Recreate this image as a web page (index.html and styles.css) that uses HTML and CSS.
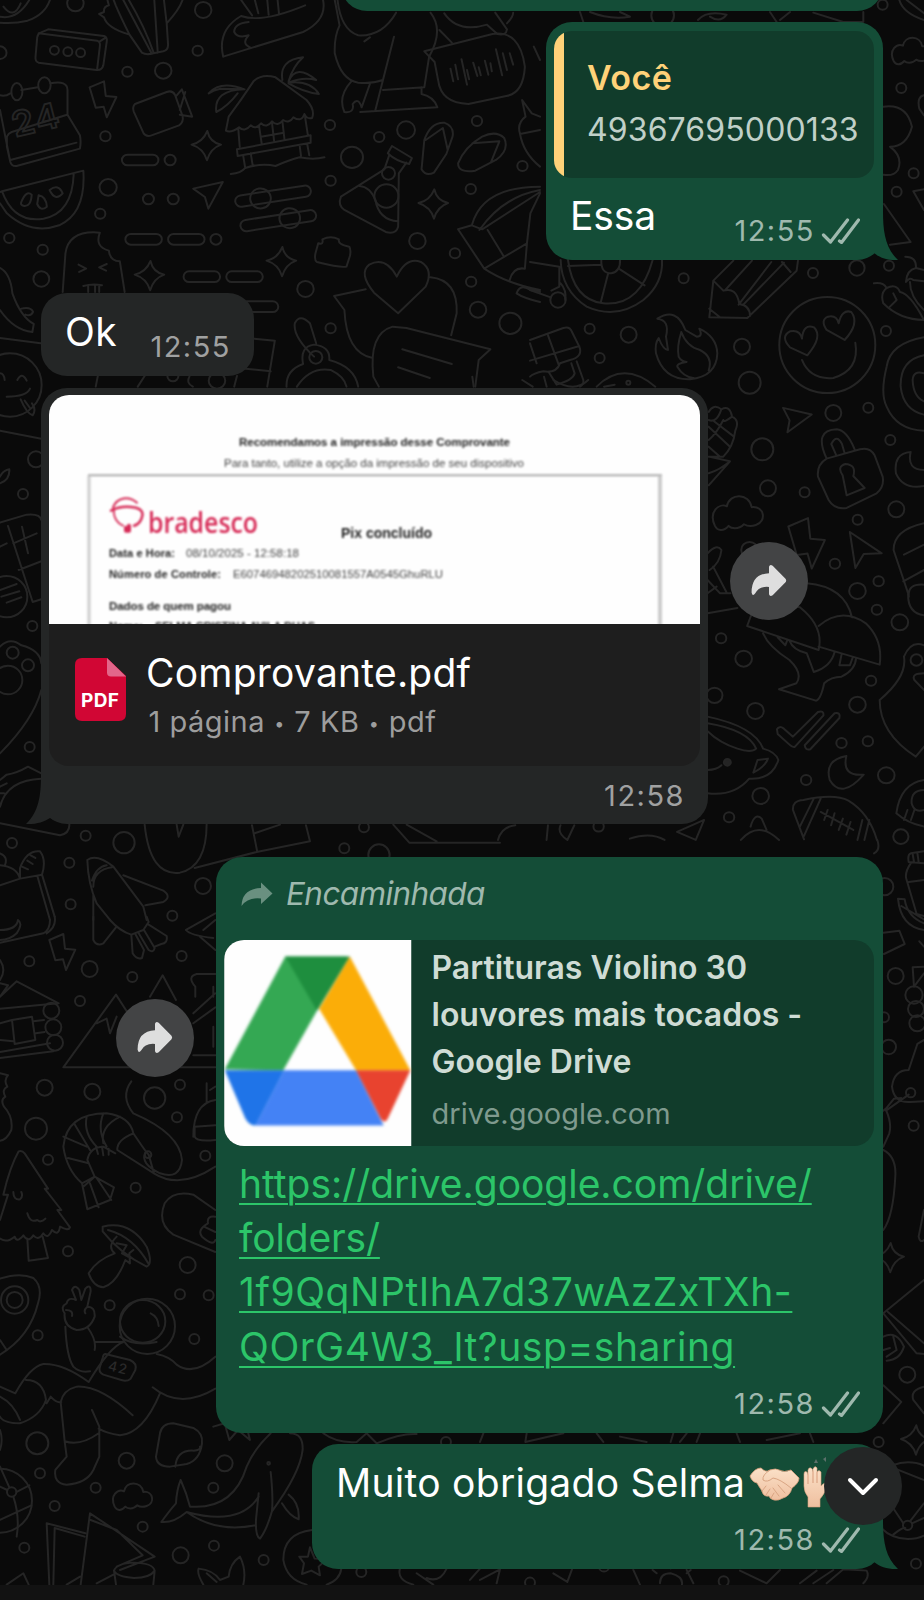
FILE: index.html
```html
<!DOCTYPE html>
<html lang="pt-BR">
<head>
<meta charset="utf-8">
<title>Conversa</title>
<link rel="stylesheet" href="styles.css">
</head>
<body>
<div class="screen">
<svg class="wallpaper" width="924" height="1600" viewBox="0 0 924 1600" aria-hidden="true">
  <defs>
    <path id="star" d="M3 -44Q10 -10 43 -3Q12 8 2 44Q-8 8 -43 -3Q-10 -10 3 -44z"/>
    <path id="bolt" d="M-38 -36L4 -54L9 -10L40 -7L12 54L3 22L-20 25z"/>
    <path id="nav" d="M-44 -20L42 -40L0 40L-10 5z"/>
    <path id="cloud" d="M-54 28C-70 -6 -44 -26 -26 -18C-20 -50 26 -50 32 -16C62 -20 68 18 42 26C30 30 20 28 14 24C0 38 -16 34 -22 28C-34 42 -48 40 -54 28z"/>
  </defs>
  <g transform="scale(.3444 .3333)">
    <g>
      <circle cx="219" cy="10" r="24"/><circle cx="590" cy="30" r="24"/><circle cx="574" cy="152" r="15"/><circle cx="370" cy="215" r="15"/><circle cx="474" cy="212" r="24"/><circle cx="0" cy="158" r="19"/>
      <circle cx="306" cy="409" r="15"/><circle cx="494" cy="480" r="16"/><circle cx="314" cy="562" r="25"/><circle cx="431" cy="597" r="16"/><circle cx="503" cy="597" r="16"/><circle cx="291" cy="641" r="15"/><circle cx="27" cy="714" r="15"/><circle cx="124" cy="749" r="15"/><circle cx="627" cy="718" r="16"/><circle cx="120" cy="837" r="23"/>
      <circle cx="958" cy="375" r="15"/><circle cx="1101" cy="411" r="15"/><circle cx="1179" cy="390" r="26"/><circle cx="1022" cy="472" r="32"/><circle cx="960" cy="542" r="15"/><circle cx="1385" cy="363" r="15"/><circle cx="1517" cy="498" r="15"/><circle cx="1367" cy="567" r="15"/><circle cx="1212" cy="723" r="24"/><circle cx="1321" cy="760" r="15"/><circle cx="1368" cy="845" r="15"/><circle cx="1388" cy="929" r="24"/><circle cx="1482" cy="970" r="32"/><circle cx="960" cy="985" r="15"/><circle cx="887" cy="867" r="24"/>
    </g>
    <path d="M0 68Q40 72 80 62Q130 45 145 0M0 50Q50 60 85 0M10 20Q40 60 60 10"/>
    <path d="M118 98L140 88L302 108Q312 112 310 124L300 196Q296 212 280 210L112 188Q102 184 103 172L108 112Q110 100 118 98zM112 100L282 122Q292 126 290 138L282 208M290 124L308 112"/>
    <circle cx="158" cy="151" r="13"/><circle cx="197" cy="155" r="13"/><circle cx="234" cy="158" r="13"/>
    <path d="M312 0L316 16Q300 20 302 36L288 42L302 52Q310 84 376 104Q350 50 336 16L330 0M376 104L412 158Q424 166 446 160L474 154Q488 150 488 134L484 70Q520 30 530 0M358 0L440 160M374 0Q420 80 446 158M448 0L458 158M476 0L484 70"/>
    <path d="M648 170L880 96Q950 60 938 0M648 170Q630 90 700 48Q760 70 886 16M722 66Q680 70 680 96Q690 116 722 106Q700 130 726 142M700 0L732 46M740 0L750 40M776 0L780 44M806 0L810 40"/>
    <path d="M0 286Q16 290 30 280M62 270L110 262M146 250Q196 240 196 270V344L232 406Q236 426 232 446L48 498Q34 500 30 486L0 330M196 344L190 346L34 396Q24 400 20 410V440L30 486M30 480L222 428"/>
    <ellipse cx="49" cy="275" rx="16" ry="26"/><ellipse cx="129" cy="256" rx="18" ry="24"/>
    <text x="44" y="412" class="digits" font-size="104" transform="rotate(-14 44 412)">24</text>
    <use href="#bolt" x="298" y="298"/>
    <path d="M392 312L484 276Q500 270 508 284L530 348Q534 366 520 376L440 406Q424 412 416 398L388 334Q384 320 392 312zM510 290L528 268L558 350L522 344M538 276L522 330"/>
    <path d="M656 392L664 350Q700 300 736 244Q760 220 800 232L890 300Q916 330 906 354Q890 358 884 342Q876 368 852 352Q840 372 822 360Q806 382 790 364Q774 386 758 370Q742 390 728 376Q710 398 694 382Q670 400 656 392zM606 280Q640 240 710 268L640 266Q620 270 606 280M710 268Q620 270 628 336Q660 320 690 280M820 240Q810 180 880 172Q850 200 838 244Q860 190 918 240Q880 230 838 248Q900 240 926 282Q880 276 838 250M692 388L696 440M886 352L894 406M688 448L902 406V428L690 468zM706 466L712 504M728 460L734 498M870 436L874 468M892 432L898 466M752 376L760 432M790 370L796 424M820 364L826 418M758 410L824 398M670 522Q700 520 712 504Q760 488 800 498Q840 480 870 472Q910 480 942 472"/>
    <use href="#star" x="599" y="437"/><use href="#star" x="1258" y="612"/><use href="#star" x="434" y="827"/><use href="#star" x="817" y="785"/>
    <rect x="354" y="464" width="106" height="32" rx="16"/><rect x="364" y="702" width="106" height="32" rx="16"/><rect x="488" y="702" width="106" height="32" rx="16"/><rect x="533" y="814" width="106" height="32" rx="16"/><rect x="657" y="814" width="106" height="32" rx="16"/><rect x="702" y="904" width="106" height="32" rx="16"/>
    <path d="M6 574L242 512Q250 640 172 676Q90 706 20 640L0 610M6 574Q40 670 126 656Q210 640 214 522M0 576L6 574M62 606Q76 570 92 584Q90 620 70 618Q58 616 62 606zM112 586Q134 590 136 620Q118 636 108 612zM144 570Q170 550 182 580Q160 606 144 570z"/>
    <use href="#nav" x="605" y="586"/>
    <g transform="rotate(-9 790 590)"><rect x="682" y="572" width="222" height="34" rx="17"/><circle cx="756" cy="590" r="30"/></g><g transform="rotate(-9 808 662)"><rect x="697" y="645" width="222" height="34" rx="17"/><circle cx="842" cy="660" r="30"/></g>
    <path d="M182 876L190 760Q200 690 290 698Q274 740 316 752Q320 784 348 784L362 876M228 794L250 806L230 816M310 792L288 802L308 812M242 858Q270 850 296 856M256 858V876M276 856V876M288 856V876"/>
    <path d="M0 804Q30 820 36 880Q60 950 98 972L94 996Q40 990 0 930M62 926Q90 920 96 936Q90 950 74 944M0 1014L118 1030"/>
    <path d="M980 0Q990 90 1040 106Q1110 110 1150 38M972 0L986 76Q970 110 972 160Q990 240 1040 248Q1080 252 1112 240L1144 110M1058 124L1074 112M1250 38Q1290 90 1246 170L1232 262L1112 270M1020 244Q980 290 1000 336Q1030 340 1024 312Q1040 290 1050 322L1074 252M1046 336L1270 322Q1260 290 1224 282V262M1112 240L1090 330M1276 90L1312 128"/>
    <path d="M1232 154L1430 102Q1510 90 1524 200Q1520 280 1470 288L1360 312Q1280 310 1272 240L1262 186zM1308 206L1316 244M1322 194L1330 238M1340 178L1356 254M1356 210L1362 238M1374 188L1386 228M1390 202L1396 226M1408 182L1418 224M1424 190L1428 214M1440 148L1458 226M1460 160L1472 210M1480 160L1490 194M1414 74L1444 102Q1470 108 1472 88L1438 38M1290 40Q1330 100 1414 74M1472 70Q1490 50 1490 38"/>
    <path d="M1224 508L1232 420Q1250 366 1290 368Q1320 380 1314 410L1296 462L1260 518Q1236 530 1224 508zM1236 420L1286 384L1300 450M1330 490Q1350 440 1400 410Q1440 390 1464 414Q1480 450 1440 480L1380 512Q1330 520 1330 490zM1372 430L1450 424L1426 486"/>
    <path d="M1126 460L1138 438L1196 474L1188 492Q1150 484 1126 460zM1130 466L1116 508L990 590Q980 616 1000 630L1120 696Q1150 704 1156 680L1158 520L1180 488M1044 558Q1074 560 1090 600Q1100 660 1156 664"/><circle cx="1128" cy="520" r="19"/><circle cx="1122" cy="588" r="35"/>
    <path d="M916 760L924 730Q940 736 936 718Q960 706 984 718Q980 734 1014 740Q1020 750 1016 768L1006 800Q990 804 920 786Q912 780 916 760z"/>
    <path d="M1156 940L1086 878Q1040 820 1072 794Q1120 768 1152 830Q1180 770 1222 786Q1260 810 1236 860zM1062 868L970 888L1000 930Q1006 1060 1082 1074M1250 832Q1330 840 1326 940L1310 1006M1084 1130Q1070 1000 1140 980L1180 984L1424 1048L1390 1080L1380 1160M1084 1130L1100 1160M1168 1048L1312 1092M1156 1102L1248 1134"/>
    <path d="M738 1016L798 1022L776 1160M688 1128L680 1160M690 1104L786 1114M880 1092Q870 1040 912 1034Q960 1040 956 1080Q1030 1100 1040 1160M880 1092Q830 1110 832 1160M862 1160Q900 1100 960 1110Q1000 1130 1006 1160M912 1070Q850 1010 856 970Q870 940 900 970L918 1030"/><circle cx="917" cy="1072" r="19"/>
    <path d="M1370 676Q1400 560 1568 560M1392 690Q1460 590 1568 570M1330 688L1370 676L1400 688L1568 576M1330 688L1406 806L1530 730L1540 640L1568 580M1406 806Q1470 850 1568 870M1416 690L1462 768M1480 840Q1490 800 1524 806L1530 730M1500 880Q1510 850 1540 870L1568 876M1500 880Q1520 894 1568 906"/>
    <path d="M1568 350L1544 340L1516 300L1526 350Q1500 370 1510 402Q1520 460 1568 500M1510 402L1568 390M1550 140L1568 180M284 1128L278 1160M420 1128L400 1160M550 1130Q540 1150 560 1160"/><circle cx="630" cy="1142" r="24"/><circle cx="502" cy="1128" r="16"/>
  </g>
  <g transform="translate(530) scale(.3333)">
    <circle cx="1058" cy="14" r="15"/><circle cx="1114" cy="264" r="15"/><circle cx="1151" cy="520" r="15"/><circle cx="1100" cy="575" r="15"/><circle cx="398" cy="46" r="34"/><use href="#cloud" x="1145" y="155"/>
    <path d="M150 36L160 66M180 36Q240 60 300 50L270 36M504 60Q530 30 590 44Q570 70 540 50M720 36L740 66M780 36L750 60M850 38L940 66H1000V36M1060 320Q1130 310 1146 380Q1130 440 1080 440Q1120 470 1104 510Q1090 530 1060 524M1182 286Q1160 290 1168 326L1182 346M1062 612L1142 726L1080 734M1182 568L1150 574L1182 630M1108 0Q1120 40 1182 60M1130 0L1182 40"/>
  </g>
  <g transform="translate(530 240) scale(.3333)">
    <circle cx="461" cy="115" r="15"/><circle cx="179" cy="266" r="15"/><circle cx="209" cy="354" r="15"/><circle cx="296" cy="284" r="24"/><circle cx="636" cy="320" r="24"/><circle cx="659" cy="428" r="33"/><circle cx="849" cy="99" r="15"/><circle cx="981" cy="84" r="23"/><circle cx="1077" cy="77" r="15"/><circle cx="1068" cy="273" r="15"/><circle cx="910" cy="519" r="24"/><circle cx="1015" cy="503" r="15"/><circle cx="1081" cy="600" r="15"/><circle cx="697" cy="628" r="33"/><circle cx="714" cy="745" r="24"/><circle cx="824" cy="757" r="15"/><circle cx="1099" cy="808" r="24"/><circle cx="983" cy="839" r="15"/>
    <path d="M92 60Q94 150 170 200Q260 240 340 180Q400 130 396 60M114 60Q130 180 220 190Q330 200 368 60M214 60Q212 100 244 100Q272 94 270 60M114 78L212 74M234 102L212 188M270 88L344 136M0 66L88 80V140L64 152M0 150L62 172M92 130Q110 150 106 180"/><circle cx="84" cy="180" r="23"/>
    <path d="M610 62L550 122L538 232L652 234L800 92L804 62M666 62L586 150M724 66L626 194M762 68L640 194M756 66L782 96M550 122L580 152Q620 140 628 192Q660 196 660 228M538 206L570 232"/>
    <path d="M382 236Q440 200 466 270L500 290Q520 290 508 266Q560 290 562 340Q560 410 480 418Q400 420 378 340Q374 310 386 294Q400 330 414 330L408 290Q420 240 382 236zM454 276Q440 320 446 350Q454 364 470 366Q440 370 442 380Q460 410 490 414M454 276Q470 320 510 330Q550 350 536 392"/>
    <circle cx="892" cy="315" r="144"/><path d="M832 346L780 322Q750 290 780 274Q810 268 816 296Q820 250 852 262Q880 290 832 346zM944 300L890 270Q870 240 894 230Q920 224 926 250Q936 206 964 216Q990 250 944 300zM816 360Q840 420 910 414Q990 390 976 308"/>
    <path d="M0 300L100 264Q120 258 126 276L148 320Q160 350 120 360L90 370Q80 400 40 394Q10 400 0 410M0 362L148 318M54 286L86 374M0 310L20 370M140 364L160 420Q162 434 150 440M124 370L134 400Q130 420 80 434L56 396M200 440Q280 360 376 440M222 440L254 434M42 410L50 440"/><circle cx="295" cy="428" r="6"/>
    <path d="M536 516Q550 490 574 508Q600 494 606 530Q630 540 616 572Q610 620 580 650H536M536 540Q560 550 574 508M580 540Q560 580 536 600M606 530Q580 550 580 540M536 560L600 620M552 544L612 590M536 620L570 650M536 650L600 664L536 736M600 664Q570 690 536 700"/>
    <use href="#nav" transform="translate(790 541) rotate(26)"/><path d="M890 656Q850 570 920 568Q950 570 974 628M918 644L904 612Q920 580 936 612L944 640M890 656L990 628Q1020 620 1034 646L1058 710Q1064 740 1040 760L950 804Q914 810 896 780L864 710Q860 674 890 656zM938 706Q920 680 946 672Q980 674 970 708L1004 744L950 766z"/><use href="#cloud" transform="translate(624 822) scale(1.28)"/>
    <path d="M1142 636Q1090 640 1098 700Q1120 750 1182 738M1142 636Q1130 690 1182 690M1182 292Q1080 310 1070 380Q1050 460 1070 500Q1100 570 1182 572M1182 346Q1110 360 1112 440Q1120 510 1182 524M1182 400Q1150 390 1148 420Q1150 470 1182 484M1032 130Q1060 126 1070 144Q1100 130 1110 156Q1140 160 1182 240Q1110 240 1060 190Q1050 160 1070 144M1080 200L1100 180L1090 160M1126 50Q1160 50 1158 84Q1130 90 1128 126Q1140 110 1150 120L1182 124M1140 126Q1140 170 1182 210M1158 84L1182 90"/>
  </g>
  <g transform="translate(380 380) scale(.347 .3333)">
    <circle cx="1311" cy="551" r="15"/><circle cx="1437" cy="604" r="15"/><circle cx="1376" cy="633" r="24"/><circle cx="1432" cy="689" r="15"/><circle cx="1498" cy="727" r="24"/><circle cx="983" cy="775" r="15"/><circle cx="1048" cy="836" r="24"/><circle cx="964" cy="946" r="23"/><circle cx="1082" cy="993" r="24"/><circle cx="1376" cy="974" r="24"/><circle cx="1415" cy="902" r="15"/><circle cx="1330" cy="1089" r="15"/><circle cx="1406" cy="1084" r="15"/><circle cx="1228" cy="1200" r="15"/><circle cx="1459" cy="1186" r="24"/><circle cx="1097" cy="1248" r="24"/><circle cx="1006" cy="1312" r="15"/><circle cx="1501" cy="1370" r="22"/><circle cx="1546" cy="840" r="17"/><circle cx="1065" cy="510" r="24"/>
    <use href="#bolt" transform="translate(1228 490) scale(1.35 1.4)"/><path d="M1354 456L1446 520L1394 522L1370 564z"/>
    <path d="M1058 738L1264 810Q1280 740 1210 682L1086 660zM1230 610Q1340 620 1360 712M1264 738Q1330 680 1400 730Q1450 780 1440 854L1264 800M1104 760Q1120 800 1180 840Q1220 880 1200 910L1150 928L1256 962Q1270 960 1280 910Q1300 890 1330 890Q1370 870 1372 834M1180 782Q1190 810 1230 820L1250 876Q1300 860 1310 816M1146 772L1168 796L1174 780M1330 824L1324 856L1354 856L1362 834"/>
    <path d="M1144 1048Q1150 1036 1164 1046L1190 1070L1262 996Q1280 990 1278 1006L1196 1100Q1190 1104 1180 1094L1146 1062zM1224 1096L1310 1000Q1328 996 1324 1014L1240 1108Q1226 1112 1224 1096z"/>
    <path d="M944 1010Q1080 1040 1104 1106Q1140 1116 1148 1140Q1130 1200 1064 1196Q1020 1250 944 1240M944 1030Q1060 1050 1084 1106Q1070 1120 1030 1106Q980 1090 944 1054M1088 1140L1118 1136Q1110 1160 1076 1178zM944 1170Q970 1170 984 1156M944 520Q970 490 984 510Q980 550 950 570M960 560L1000 640M944 600L980 640H1010M944 700L1030 684M944 640L970 620"/><circle cx="1001" cy="1147" r="10" class="solid"/>
    <path d="M1344 1128Q1280 1140 1296 1200Q1330 1260 1394 1184Q1330 1190 1344 1128zM1222 1378L1190 1290Q1188 1262 1220 1260Q1310 1240 1350 1262Q1410 1300 1432 1380M1270 1256L1222 1368M1250 1256L1210 1340M1390 1320L1376 1380M1410 1320L1396 1380M1270 1296L1364 1350M1290 1290L1280 1320M1310 1300L1300 1336M1334 1316L1322 1350M1356 1326L1344 1364"/>
    <path d="M1568 430Q1480 450 1480 510L1522 640Q1520 700 1568 706M1510 524L1568 494M1508 604L1568 570M1568 614Q1520 610 1524 650M1568 796Q1530 780 1510 830Q1520 890 1440 960Q1440 1060 1544 1130L1568 1100M1568 880Q1530 880 1540 900L1568 930M1568 1200Q1500 1210 1488 1300Q1520 1330 1568 1340M1568 1230Q1530 1230 1532 1270Q1540 1300 1568 1290M1520 1290L1510 1320M1540 1290L1530 1320"/>
    <path d="M856 1356L934 1320L910 1380zM1068 1340Q1080 1296 1100 1316L1114 1350M1040 1380Q1090 1320 1150 1380M340 1380Q350 1340 390 1336M484 1336L480 1380M520 1336Q510 1360 540 1380L560 1336M720 1376Q780 1356 820 1380M270 20L266 -10M410 0L440 20M500 0Q560 40 600 0"/><circle cx="630" cy="1340" r="15"/>
  </g>
  <g transform="translate(0 280) scale(.3333)">
    <circle cx="69" cy="642" r="15"/><circle cx="108" cy="538" r="24"/><circle cx="20" cy="950" r="62"/><circle cx="97" cy="1038" r="15"/>
    <circle cx="30" cy="315" r="95"/><path d="M0 280Q12 280 14 300M52 300Q66 274 80 302M20 350Q80 350 90 326M62 358Q80 400 98 406Q110 390 96 370M74 362L90 384M0 452L124 476M0 610Q30 600 28 568Q10 570 0 590M0 728L80 704Q120 700 124 720M24 738L98 966L124 958M0 800L20 790M40 790L110 760M66 740L84 820M56 870L124 844M0 930L50 912M4 950L58 934M20 968L64 952"/>
  </g>
  <g transform="translate(0 620) scale(.3333)">
    <circle cx="38" cy="98" r="18"/><circle cx="84" cy="136" r="18"/><circle cx="24" cy="180" r="43"/><circle cx="89" cy="381" r="15"/><circle cx="257" cy="647" r="15"/><circle cx="372" cy="668" r="32"/><circle cx="36" cy="669" r="15"/><circle cx="208" cy="728" r="15"/><circle cx="212" cy="853" r="15"/><circle cx="609" cy="798" r="24"/><circle cx="517" cy="887" r="15"/><circle cx="1092" cy="622" r="15"/><circle cx="1033" cy="685" r="15"/><circle cx="1137" cy="705" r="32"/>
    <path d="M0 80Q30 50 64 76Q120 90 124 130M124 210Q100 300 0 400M0 480L20 464Q50 460 84 440L124 460M0 560Q20 480 124 476M0 500L20 490M0 520H12M0 610L180 646Q210 640 208 612M434 614Q450 770 540 758Q620 740 620 612M530 614L536 650L550 614M584 744L770 696L930 664L918 616M756 616L772 696M764 640L840 614M1180 614L1228 668H1500M1220 614L1310 664"/>
    <path d="M60 744Q80 690 120 694Q140 720 126 764L60 776zM66 740L84 748M82 722L98 732M92 706L106 714M0 736Q50 740 60 776L0 796M126 764L164 890M112 768L150 900M0 700Q26 710 14 738M262 720Q290 700 340 740L430 860L440 900M262 720Q264 790 290 850L330 900M280 800Q280 750 336 742M276 782Q290 740 320 736M370 766L490 812Q516 830 490 846L436 856M280 826V900"/>
  </g>
  <g transform="translate(0 850) scale(.3333)">
    <circle cx="88" cy="334" r="15"/><circle cx="269" cy="357" r="24"/><circle cx="397" cy="381" r="15"/><circle cx="240" cy="453" r="15"/><circle cx="545" cy="318" r="15"/><circle cx="134" cy="713" r="24"/><circle cx="277" cy="725" r="24"/><circle cx="464" cy="744" r="32"/><circle cx="540" cy="704" r="15"/><circle cx="531" cy="802" r="15"/><circle cx="108" cy="836" r="33"/><circle cx="144" cy="929" r="15"/><circle cx="407" cy="1013" r="15"/><circle cx="616" cy="917" r="15"/>
    <use href="#bolt" x="186" y="306"/>
    <path d="M150 210Q150 240 130 250L0 278M164 200Q170 230 140 250M0 240Q50 240 54 210Q70 220 50 250Q30 270 0 270M280 200V270Q290 290 310 280L348 232M330 210Q360 244 394 254L430 240L446 216L440 200M394 254L398 310Q410 330 426 324L432 300L406 252M414 246L446 300Q460 310 464 294L432 240M446 224L500 258Q504 280 484 282L464 290M558 240L646 190M558 240Q570 256 640 264M600 260L646 300M646 210L610 240"/>
    <path d="M0 440L50 394L176 460L0 476M0 400L24 406L0 440M0 520L36 510M0 570L40 574M36 510L96 500L106 570L44 582zM100 514L132 510M108 550L134 546M0 606L150 580M0 624L160 604M0 330Q20 360 0 390M190 652L348 434L384 490M290 520L320 506L330 550L350 500M190 652H646M450 440L488 376L528 450M586 440V410Q560 380 590 372H646M640 410V440M646 430L580 490M580 520L646 472M640 530V590M580 616H646"/><circle cx="154" cy="482" r="24"/><circle cx="160" cy="532" r="24"/><circle cx="165" cy="578" r="24"/>
    <path d="M190 890Q200 790 320 790Q390 800 400 850Q440 910 446 914L462 970L352 900Q350 870 400 850M190 890Q200 960 246 1000L284 980L262 930Q270 890 310 890L346 910M190 860L260 890M222 820L270 900M260 800Q250 850 290 890M310 790Q290 840 320 890M360 800Q300 830 310 880M204 924L266 940M288 890L294 912M306 890L310 916M326 896V914M246 1000L262 1078L330 1050L342 1012L284 980L250 1010M270 1000L296 1072M290 984L334 1050M394 694Q360 740 400 790Q540 850 546 930Q540 990 480 970Q420 940 436 910M462 970Q540 1020 646 950M580 860Q580 760 646 750M584 830L646 826M584 830V860Q590 876 646 870M620 760V700M630 720L646 710"/><circle cx="444" cy="914" r="10"/>
    <path d="M0 670L24 676Q10 690 22 710Q4 720 16 740Q0 750 12 770Q40 800 34 840Q20 870 0 872"/>
  </g>
  <g transform="translate(0 1150) scale(.3333)">
    <circle cx="204" cy="304" r="15"/><circle cx="563" cy="345" r="24"/><circle cx="540" cy="433" r="15"/><circle cx="626" cy="436" r="15"/><circle cx="329" cy="466" r="15"/><circle cx="583" cy="567" r="15"/><circle cx="113" cy="556" r="15"/><circle cx="112" cy="880" r="33"/><circle cx="380" cy="932" r="24"/><circle cx="120" cy="970" r="15"/><circle cx="287" cy="1013" r="15"/><circle cx="164" cy="1068" r="15"/><circle cx="674" cy="940" r="24"/><circle cx="640" cy="1013" r="15"/><circle cx="428" cy="1130" r="15"/><circle cx="73" cy="1193" r="15"/><circle cx="542" cy="1216" r="24"/><circle cx="642" cy="1187" r="15"/><circle cx="791" cy="1230" r="15"/><circle cx="1084" cy="1266" r="15"/><circle cx="1338" cy="876" r="15"/>
    <path d="M10 134Q30 50 56 4Q66 0 74 10L144 116L134 116L184 180L172 180L210 232Q206 244 180 230Q176 260 156 240Q144 270 130 250Q116 274 100 256Q84 280 70 256Q50 280 44 260Q20 280 0 266M10 134L24 134L0 210M40 126Q40 150 60 148Q70 140 64 126M82 190Q90 220 112 210Q120 220 136 206M82 266L86 332L144 324L128 260"/>
    <path d="M308 230Q390 210 440 290Q460 340 440 350Q360 310 308 244zM324 240Q400 260 446 342M350 260Q320 290 344 310Q290 330 266 370Q280 410 310 412Q350 400 376 330L390 340L388 310L400 300M350 280L380 286L366 310L384 320M646 180L580 134Q520 120 494 160Q470 220 520 254L646 306M646 200Q620 196 624 220Q590 240 606 260Q640 290 646 270M612 230L646 246"/>
    <path d="M0 386Q60 366 100 384Q130 410 114 460Q90 560 0 614M0 570L20 600"/><circle cx="44" cy="450" r="41"/><circle cx="44" cy="450" r="24"/>
    <path d="M194 490Q180 470 200 460Q204 440 228 450L216 420Q224 400 238 420L244 450L256 416Q272 400 272 424L262 470Q286 470 284 500Q270 540 230 540Q190 530 194 490zM198 480Q220 480 216 498M262 470Q250 480 256 490M196 530Q200 620 220 650Q240 670 270 664M264 534Q290 570 284 600M284 576H370Q330 590 266 696Q190 640 130 642Q90 650 46 730L0 710M470 612Q510 620 530 644Q580 680 646 620M458 712Q540 780 646 716M480 730Q430 850 360 856Q320 850 296 836M182 756Q190 720 230 710Q300 706 398 796M182 756L194 874Q240 890 296 850M194 874L200 920L166 960Q160 1000 200 1004Q260 1000 280 960L298 920V830L276 780M78 690Q130 690 138 750Q120 800 60 820Q10 820 0 800M0 740Q40 760 60 810M140 760L152 740Q170 760 184 756"/><circle cx="442" cy="529" r="83"/><ellipse cx="428" cy="514" rx="68" ry="64"/><path d="M452 490Q474 500 476 528M360 560Q400 590 470 576"/>
    <path d="M316 612L390 630Q412 640 406 660L392 686Q380 696 364 690L310 674Q294 666 300 650L308 624Q310 612 316 612z"/><text x="322" y="660" class="tag" font-size="42" transform="rotate(14 322 660)">42</text>
    <path d="M480 850Q486 820 520 820L580 834Q610 850 606 880Q600 930 560 942L510 950Q470 950 468 920zM526 950Q530 900 580 902Q604 900 600 890"/><use href="#cloud" x="398" y="1042"/>
    <path d="M812 850Q760 900 740 950Q700 1080 570 1070Q560 1030 542 990Q530 1020 528 1060Q510 1080 484 1116Q520 1120 560 1086Q650 1150 766 1126M870 850Q910 850 908 900Q900 970 816 1084Q800 1140 780 1166Q766 1160 768 1110L776 1030M812 966Q820 1040 816 1084M866 1034Q900 1060 896 1108Q870 1100 846 1060M560 1086Q720 1130 776 1040M640 830L674 820L688 870L714 840L750 870L744 846M0 840Q10 870 0 900"/><circle cx="806" cy="940" r="4"/>
    <circle cx="0" cy="1052" r="96"/><circle cx="35" cy="1026" r="14"/><path d="M0 1010L22 1020M0 950L28 1012M50 1026L88 1006M40 1040Q60 1100 50 1160M0 1110L94 1066"/>
    <path d="M148 1304L140 1120L256 1150M160 1304L164 1134L254 1160M242 1304L270 1090L464 1220L360 1260M272 1110L350 1140L428 1216L350 1250M290 1300L340 1274M342 1262Q350 1240 402 1238Q460 1240 464 1262Q450 1284 402 1284Q350 1280 342 1262M342 1262L348 1304M464 1262L460 1304M20 1304L70 1270L86 1304M200 1304L240 1280M610 1304Q590 1270 596 1256Q640 1260 660 1290L686 1280Q690 1240 720 1220Q740 1260 730 1304M620 1270L650 1296"/>
    <path d="M936 1140Q850 1150 850 1230Q860 1290 920 1304M1024 1256Q1020 1290 980 1304M930 1192L944 1226L980 1228L956 1250L960 1276L934 1262L906 1272L912 1240L898 1220L924 1220zM1200 1256Q1190 1290 1240 1304M1340 1256Q1320 1300 1280 1284M1250 1270L1300 1304M970 850Q1010 880 1070 876L1100 850L1130 880Q1200 850 1250 852M1410 1290L1440 1256"/>
  </g>
  <g transform="translate(480 1150) scale(.3333)">
    <circle cx="1282" cy="674" r="24"/><circle cx="1196" cy="876" r="15"/><circle cx="1308" cy="1241" r="15"/><circle cx="150" cy="1298" r="15"/><circle cx="731" cy="1294" r="15"/><circle cx="372" cy="1250" r="15"/>
    <use href="#star" x="1229" y="323"/><use href="#star" transform="translate(1306 870) scale(1)"/><circle cx="1284" cy="1052" r="115"/><circle cx="1283" cy="1126" r="14"/><path d="M1190 1000L1270 1120M1296 1120L1332 1104M1240 1154Q1270 1130 1276 1134M1332 1060L1290 1114M1230 950L1332 990"/>
    <path d="M1210 0Q1250 20 1246 80Q1240 200 1210 240M1332 180L1316 260Q1320 280 1332 270M1210 490L1332 390M1210 490L1310 610L1332 612M1224 486L1332 580M1210 560Q1250 540 1272 590Q1260 630 1220 632M1240 560L1250 600L1220 620M1210 600L1230 594M1210 706L1264 756L1210 820M1332 710Q1290 720 1300 750L1332 790M10 850L0 876M140 850L136 876L250 850M350 850L370 876M420 860L500 876M580 850L572 876M620 850L600 876M660 850L650 876M770 850L780 876M860 870L960 850M990 850L1000 876M0 1290L60 1258L50 1300M220 1270L262 1296L276 1258M460 1260L480 1304M620 1260L640 1300M540 1300Q540 1270 572 1270Q610 1280 606 1304M572 1256V1244M530 1270L518 1260M620 1270L632 1260M780 1262L860 1300L900 1260M960 1300L1010 1262M1000 1300L1060 1260M1040 1300L1090 1258L1160 1262Q1170 1280 1150 1300"/>
  </g>
  <g transform="translate(864 840) scale(.3333)">
    <circle cx="62" cy="140" r="26"/><circle cx="95" cy="408" r="24"/><circle cx="60" cy="532" r="15"/><circle cx="74" cy="621" r="22"/><circle cx="149" cy="857" r="15"/><circle cx="150" cy="465" r="26"/><circle cx="156" cy="507" r="24"/><circle cx="160" cy="550" r="24"/><circle cx="140" cy="758" r="14"/>
    <path d="M180 34L140 40Q130 44 134 66L180 70M146 42L150 66M160 38L164 66M140 70Q120 100 128 120L158 222L180 228M134 126L180 120M102 176L122 178Q130 230 180 250M102 176Q110 260 180 270M112 198L180 238M58 278L106 272L122 312L60 342M180 600L160 612L134 690Q90 690 84 740Q90 790 140 786L180 784M58 812L66 806L90 776L112 774M66 812L134 764M66 810Q84 850 76 880L58 920M166 304L180 320M180 380L146 382L150 440L180 400M40 0Q50 30 30 40"/>
  </g>
</svg>

<main class="chat">
  <section class="bubble out cut"></section>

  <section class="bubble out reply">
    <blockquote class="quote">
      <div class="quote-name">Você</div>
      <div class="quote-text">49367695000133</div>
    </blockquote>
    <div class="line">
      <span class="msg essa">Essa</span>
      <span class="stamp">12:55<svg class="ticks" viewBox="0 0 38 26"><path d="M2 17L9 24L26 2M18 23L20 24.500L37 2"/></svg></span>
    </div>
    <svg class="tail right" viewBox="0 0 30 50"><path d="M0 0H15C15 20 17 37 30 49C20 49.500 12 47 6 42L0 46z"/></svg>
  </section>

  <section class="bubble in ok">
    <span class="msg">Ok</span><span class="stamp">12:55</span>
  </section>

  <div class="row doc-row">
    <section class="bubble in doc">
      <div class="card">
        <svg class="preview" viewBox="49 395.300 651 229" preserveAspectRatio="none">
          <rect x="49" y="395" width="651" height="230" fill="#fefefe"/>
          <g class="scan">
            <path d="M89 626V475.500H661V626" fill="none" stroke="#aaa" stroke-width="2"/>
            <path d="M660 476V626" stroke="#ccc" stroke-width="4"/>
            <path d="M89 476V626" stroke="#ccc" stroke-width="3"/>
            <g font-weight="700" fill="#222">
              <text x="239" y="446" font-size="11.500" textLength="271">Recomendamos a impressão desse Comprovante</text>
              <text x="341" y="538" font-size="14" textLength="91">Pix concluído</text>
              <text x="109" y="557" font-size="11" textLength="66">Data e Hora:</text>
              <text x="109" y="578" font-size="11" textLength="112">Número de Controle:</text>
              <text x="109" y="610.500" font-size="11.500" textLength="122">Dados de quem pagou</text>
              <text x="109" y="630.500" font-size="11" textLength="34">Nome:</text>
              <text x="155" y="630.500" font-size="11" textLength="160">SELMA CRISTINA AVILA RUAS</text>
            </g>
            <g fill="#444">
              <text x="224" y="467" font-size="11.500" textLength="300">Para tanto, utilize a opção da impressão de seu dispositivo</text>
              <text x="186" y="557" font-size="11.500" textLength="113">08/10/2025 - 12:58:18</text>
              <text x="233" y="578" font-size="11" textLength="210" lengthAdjust="spacingAndGlyphs">E60746948202510081557A0545GhuRLU</text>
            </g>
            <text class="brand" x="148" y="533.500" font-size="28" textLength="110" lengthAdjust="spacingAndGlyphs">bradesco</text>
            <g fill="none" stroke="#d62a56" stroke-linecap="round"><path d="M113 508C117 497 129 496 137 503" stroke-width="2"/><path d="M111 511C122 505 143 506 142.500 515C142 521 138 525 134 526" stroke-width="2.500"/><path d="M114 510C113 518 118 524 123 526" stroke-width="1.800"/><path d="M126 528V531M129 526V531" stroke-width="4"/></g>
          </g>
        </svg>
        <div class="file">
          <svg class="pdf" viewBox="0 0 51 63"><path d="M7 0H32L51 18V56Q51 63 44 63H7Q0 63 0 56V7Q0 0 7 0z" fill="#d10634"/><path d="M32 0L51 18.500H36Q32 18.500 32 14.500z" fill="#e2668a"/><text x="6" y="49.300" textLength="38">PDF</text></svg>
          <div><div class="msg filename">Comprovante.pdf</div><div class="meta">1 página <i>•</i> 7 KB <i>•</i> pdf</div></div>
        </div>
      </div>
      <span class="stamp">12:58</span>
      <svg class="tail left" viewBox="0 0 30 50"><path d="M30 0H15C15 20 13 37 0 49C10 49.500 18 47 24 43L30 46z"/></svg>
    </section>
    <span class="share"><svg viewBox="0 0 40 36"><path d="M20 10V3Q21 0 24 2L38 16Q39.500 18 38 20L24 34Q21 36 20 33V25Q9 24 5 32Q2 36 1 31Q1 11 20 10z"/></svg></span>
  </div>

  <div class="row link-row">
    <span class="share"><svg viewBox="0 0 40 36"><path d="M20 10V3Q21 0 24 2L38 16Q39.500 18 38 20L24 34Q21 36 20 33V25Q9 24 5 32Q2 36 1 31Q1 11 20 10z"/></svg></span>
    <section class="bubble out link">
      <div class="forwarded"><svg viewBox="0 0 32 24"><path d="M20 6V0.500L31.500 11.500L20 22V16.500Q7 15 0.500 24Q1 7 20 6z"/></svg><em>Encaminhada</em></div>
      <div class="site">
        <svg class="thumb" viewBox="0 0 187 206"><rect width="187" height="206" fill="#fefefe"/><g class="soft" transform="translate(-2.500 -3) scale(1.025)"><path d="M62 19L3 129L60 130L94 70L122 19z" fill="#34a853"/><path d="M62 19H125L93 72z" fill="#1e8e3e"/><path d="M125 19L95 70L131 130H184z" fill="#fbad08"/><path d="M3 130H61L33 184Q27 184 23 177z" fill="#1f74e8"/><path d="M61 130H131L158 184H33z" fill="#4482f5"/><path d="M131 130H184L162 177Q159 183 155 177z" fill="#e8432f"/></g></svg>
        <div class="site-text"><div class="site-title">Partituras Violino 30<br>louvores mais tocados -<br>Google Drive</div><div class="domain">drive.google.com</div></div>
      </div>
      <a class="msg url"><span class="u1">https://drive.google.com/drive/</span><br><span class="u2">folders/</span><br><span class="u3">1f9QqNPtIhA7d37wAzZxTXh-</span><br><span class="u4">QOrG4W3_lt?usp=sharing</span></a>
      <span class="stamp">12:58<svg class="ticks" viewBox="0 0 38 26"><path d="M2 17L9 24L26 2M18 23L20 24.500L37 2"/></svg></span>
    </section>
  </div>

  <section class="bubble out thanks">
    <div class="thanks-line"><span class="msg">Muito obrigado Selma</span>
      <svg class="emoji" viewBox="0 0 80 46"><defs><linearGradient id="skin" x2="0" y2="1"><stop stop-color="#fbe1c8"/><stop offset="1" stop-color="#efbf9f"/></linearGradient></defs>
        <path d="M1 10Q6 2 12 2Q17 7 21 4Q27 2 30 4Q35 7 42 4L50 12Q50 17 43 22Q41 30 34 32Q29 35 25 34Q21 33 20 30Q14 31 13 25Q9 19 8 17Q3 16 1 10z" fill="url(#skin)" stroke="#d9a07c" stroke-width=".8"/>
        <path d="M21 4Q13 9 14 14Q18 17 24 12Q31 13 42 22M29 19L36 27M24 22L30 30M13 25L17 20M17 29L21 23M22 32L25 27" fill="none" stroke="#d9a583" stroke-width="1" stroke-linecap="round"/>
        <path d="M59 41V31Q55 26 55 20V8Q55 5 57 5.500Q59 6 59 9V18V4Q60 1 62 2Q64 3 64 6V17V3Q66-1 68 2V17V6Q70 3 72 6V20Q76 15 78 19Q76 28 71 33V41z" fill="url(#skin)" stroke="#d9a07c" stroke-width=".6"/><path d="M65-3L67-7L69-3zM74-7L77-9V-4z" fill="#5b706a"/></svg>
    </div>
    <span class="stamp">12:58<svg class="ticks" viewBox="0 0 38 26"><path d="M2 17L9 24L26 2M18 23L20 24.500L37 2"/></svg></span>
    <svg class="tail right" viewBox="0 0 30 50"><path d="M0 0H15C15 20 17 37 30 49C20 49.500 12 47 6 42L0 46z"/></svg>
    <span class="scroll"><svg viewBox="0 0 32 20"><path d="M3 3L16 16L29 3"/></svg></span>
  </section>
</main>
<footer class="bar"></footer>
</div>
</body>
</html>
```

FILE: styles.css
```css
* { box-sizing: border-box; }
body { margin: 0; background: #0a0a0a; font-family: Inter, "Liberation Sans", sans-serif; }
.screen { position: relative; width: 924px; height: 1600px; overflow: hidden; display: flex; flex-direction: column; background: #0a0a0a; }
.wallpaper { position: absolute; inset: 0; }
.wallpaper path, .wallpaper circle, .wallpaper ellipse, .wallpaper rect { fill: none; stroke: #252525; stroke-width: 2px; stroke-linecap: round; stroke-linejoin: round; vector-effect: non-scaling-stroke; }
.wallpaper .solid { fill: #242424; }
.wallpaper .digits { fill: none; stroke: #252525; stroke-width: 5.5px; font-weight: 600; letter-spacing: 6px; }
.wallpaper .tag { fill: #292929; font-weight: 500; letter-spacing: 3px; }
.chat { position: relative; height: 1584.7px; flex: none; display: flex; flex-direction: column; align-items: flex-end; padding-right: 41px; }
.bar { position: relative; flex: 1; background: #121212; }

.bubble { position: relative; flex: none; border-radius: 26px; }
.out { background: #144d37; }
.in { background: #242626; align-self: flex-start; margin-left: 41px; }
.cut { width: 542px; height: 60px; margin: -49px 0 11px; }

.msg { font-size: 39px; line-height: 50px; color: #fff; letter-spacing: -.15px; white-space: nowrap; }
.stamp { display: flex; align-items: flex-start; font-size: 29px; line-height: 36px; letter-spacing: 1.5px; color: #a0a1a1; white-space: nowrap; }
.out .stamp { color: #9fb9ae; }
.ticks { width: 39px; height: 26px; margin: 5px 0 0 6px; fill: none; stroke: #9fb9ae; stroke-width: 3.2; stroke-linecap: round; stroke-linejoin: round; }
.tail { position: absolute; width: 30px; height: 50px; bottom: -1px; }
.tail.right { right: -15px; fill: #144d37; }
.tail.left { left: -15px; fill: #242626; }

.reply { width: 337px; height: 238px; padding: 9px 9px 0 8px; }
.quote { margin: 0; height: 147px; padding: 25px 0 0 33px; border-radius: 18px; background: linear-gradient(90deg, #ffd279 10.5px, #113c2b 10.5px); }
.quote-name { font-size: 34px; line-height: 44px; font-weight: 600; letter-spacing: .5px; color: #ffd279; }
.quote-text { font-size: 32px; line-height: 60px; letter-spacing: .12px; color: #c0d0c8; white-space: nowrap; }
.line { display: flex; justify-content: space-between; padding: 13px 14px 0 16px; }
.line .stamp { margin-top: 22px; }

.ok { display: flex; justify-content: space-between; width: 213px; height: 82.5px; margin-top: 33px; padding: 14px 23px 0 24px; }
.ok .msg { letter-spacing: .5px; }
.ok .stamp { margin-top: 21.5px; }

.row { display: flex; align-items: center; }
.doc-row { align-self: flex-start; margin-top: 12px; gap: 21.5px; }
.doc { width: 667px; height: 436.5px; padding: 7.8px 8px 0; }
.card { height: 371.2px; border-radius: 20px; overflow: hidden; background: #1e1e1e; }
.preview { display: block; width: 651px; height: 229px; }
.scan { filter: blur(1px); font-family: "Liberation Sans", sans-serif; }
.brand { font-family: "Open Sans", sans-serif; font-weight: 600; fill: #d62a56; }
.file { display: flex; align-items: flex-start; gap: 20px; padding: 24px 0 0 26px; }
.pdf { width: 51px; height: 63px; margin-top: 10px; }
.pdf text { fill: #fff; font-size: 19px; font-weight: 700; }
.filename { letter-spacing: .23px; }
.meta { margin: 6px 0 0 2.5px; font-size: 29px; line-height: 36px; color: #9d9d9d; white-space: nowrap; letter-spacing: .5px; }
.meta i { display: inline-block; width: 12px; font-style: normal; font-size: 18px; line-height: 20px; text-align: center; vertical-align: 2px; }
.doc .stamp { justify-content: flex-end; margin: 11.3px 15px 0 0; }
.share { flex: none; width: 78px; height: 78px; border-radius: 50%; background: #434445; display: flex; align-items: center; justify-content: center; }
.share svg { width: 38px; height: 33px; fill: #dedede; }
.doc-row .share { margin-top: -50px; }

.link-row { margin-top: 33px; gap: 22.3px; }
.link-row .share { margin-top: -214px; }
.link { width: 667px; height: 575.7px; padding: 18px 9px 0 8px; }
.forwarded { display: flex; align-items: flex-start; gap: 13px; height: 64.5px; padding-left: 17px; font-size: 31.5px; line-height: 38px; letter-spacing: -.6px; color: #9fb9ae; }
.forwarded svg { width: 32px; height: 24px; margin-top: 7px; fill: #6a9080; }
.site { display: flex; height: 206px; border-radius: 20px; overflow: hidden; background: #113c2b; }
.thumb { flex: none; width: 187.5px; height: 206px; }
.soft { filter: blur(1.8px); }
.site-text { padding: 4px 0 0 20px; white-space: nowrap; }
.site-title { font-size: 32px; font-weight: 600; line-height: 47.3px; color: #cfdcd5; }
.domain { margin-top: 8px; font-size: 29px; line-height: 42px; color: #7f9a8e; }
.url { display: block; margin: 11.5px 0 0 15px; line-height: 54.2px; color: #2cc569; text-decoration: underline; text-decoration-thickness: 2px; text-underline-offset: 5px; }
.u1 { letter-spacing: -.03px; }
.u3, .u4 { letter-spacing: .57px; }
.link .stamp { justify-content: flex-end; margin: 12px 14px 0 0; }

.thanks { width: 571px; height: 125px; margin-top: 11px; padding: 14px 0 0 24px; }
.thanks-line { display: flex; gap: 4px; height: 50px; }
.thanks .msg { letter-spacing: .27px; }
.emoji { width: 80px; height: 46px; overflow: visible; margin-top: 8px; }
.thanks .stamp { position: relative; justify-content: flex-end; margin: 14px 23px 0 0; }
.scroll { position: absolute; left: 511.500px; top: 3.500px; width: 78px; height: 78px; border-radius: 50%; background: #242626; display: flex; align-items: center; justify-content: center; }
.scroll svg { width: 32px; height: 20px; margin-top: 1px; fill: none; stroke: #fff; stroke-width: 4; stroke-linecap: round; stroke-linejoin: round; }
```
